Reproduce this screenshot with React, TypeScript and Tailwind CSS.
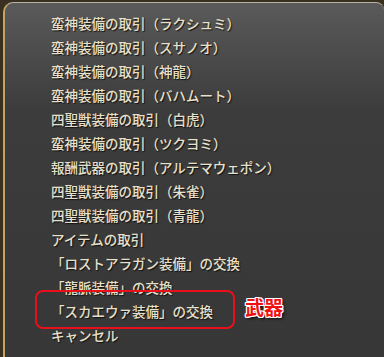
import React from "react";

const items = [
  "蛮神装備の取引（ラクシュミ）",
  "蛮神装備の取引（スサノオ）",
  "蛮神装備の取引（神龍）",
  "蛮神装備の取引（バハムート）",
  "四聖獣装備の取引（白虎）",
  "蛮神装備の取引（ツクヨミ）",
  "報酬武器の取引（アルテマウェポン）",
  "四聖獣装備の取引（朱雀）",
  "四聖獣装備の取引（青龍）",
  "アイテムの取引",
  "「ロストアラガン装備」の交換",
  "「龍脈装備」の交換",
  "「スカエウァ装備」の交換",
  "キャンセル",
];

export default function App() {
  return (
    <div className="w-[384px] h-[357px] overflow-hidden bg-[#3a3022] pl-[3px] pt-[2px] relative">
      <div
        className="relative h-[360px] rounded-tl-[10px] rounded-tr-[8px] border-l-2 border-t border-l-[#c4a462] border-t-[#b9b2a2] bg-gradient-to-b from-[#5a5a5a] via-[#3c3c3c] via-30% to-[#373737] pl-[46px] pt-[8px]"
        style={{ fontFamily: '"Noto Sans CJK JP", "Noto Sans", sans-serif' }}
      >
        {items.map((t) => (
          <div
            key={t}
            className="h-[24px] leading-[24px] text-[13.5px] font-medium text-[#e8e0ca] [text-shadow:1px_1px_1px_#111] whitespace-nowrap"
          >
            {t}
          </div>
        ))}
        <div className="absolute left-[30px] top-[287px] w-[200px] h-[39px] rounded-[8px] border-2 border-[#e8101a]" />
        <div className="absolute left-[240px] top-[291px] text-[19px] leading-[26px] font-bold text-[#f01010] [text-shadow:-1px_-1px_0_#fff,1px_-1px_0_#fff,-1px_1px_0_#fff,1px_1px_0_#fff,0_-1px_0_#fff,0_1px_0_#fff,-1px_0_0_#fff,1px_0_0_#fff,2px_2px_3px_#000]">
          武器
        </div>
      </div>
    </div>
  );
}
